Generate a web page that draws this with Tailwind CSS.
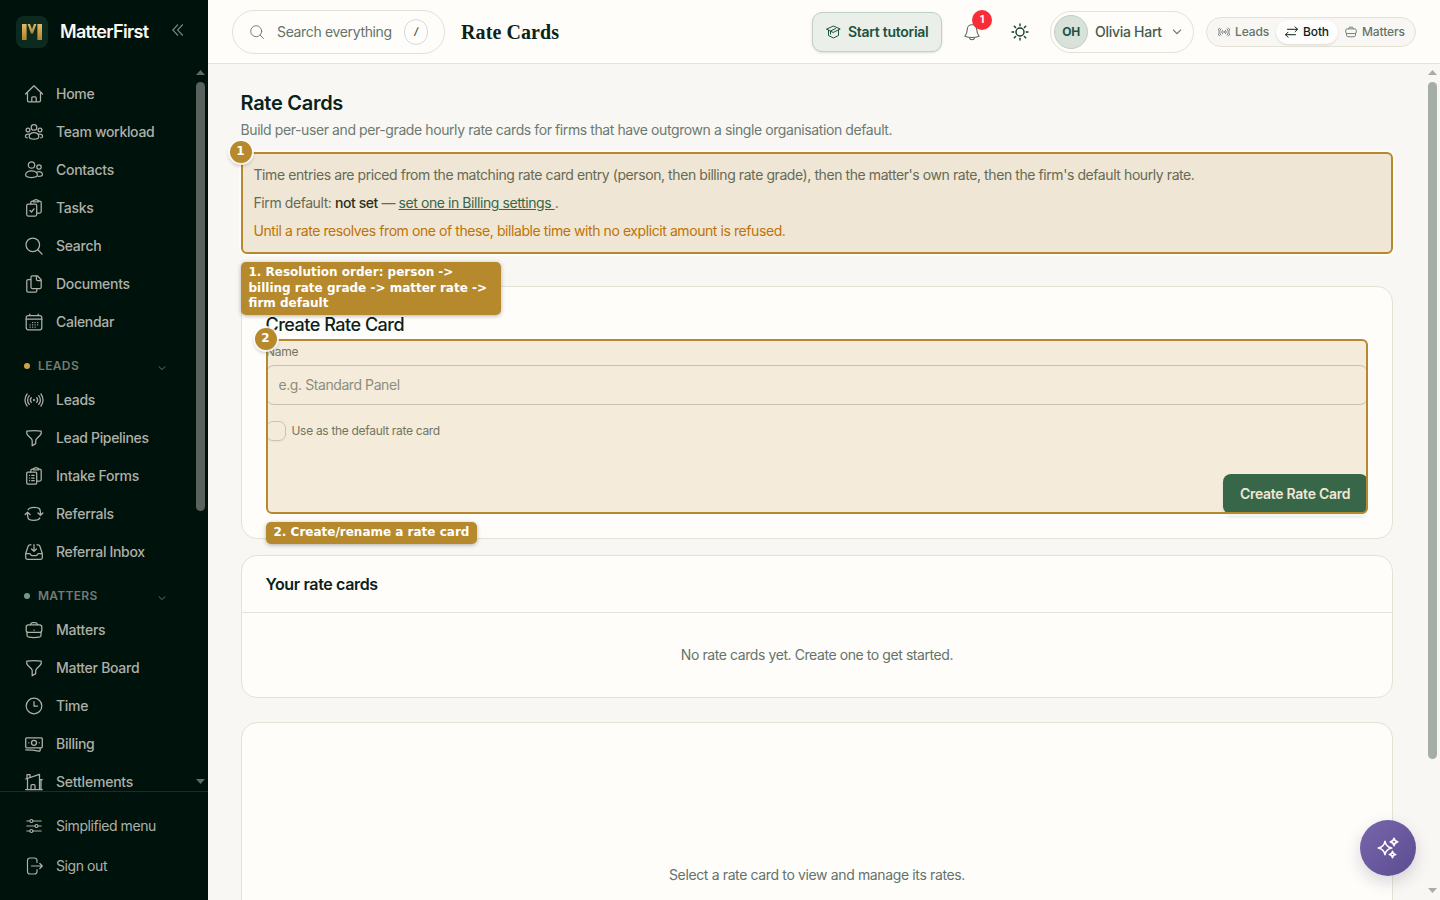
<!DOCTYPE html>
<html lang="en">

<head>
    <meta charset="UTF-8">
    <meta name="viewport" content="width=device-width, initial-scale=1.0">
    <title>Rate Cards - MatterFirst</title>
    <script src="https://cdn.jsdelivr.net/npm/@tailwindcss/browser@4"></script>
</head>

<body class="flex h-screen overflow-hidden bg-[#f9f7f3] font-['Inter','Liberation_Sans',sans-serif] text-sm tracking-[-0.02em] text-[#0b2219]">

    <!-- Sidebar -->
    <aside class="flex h-full w-[208px] shrink-0 flex-col bg-[#00120c] text-[#aeb0a8]">
        <div class="flex h-16 shrink-0 items-center pl-4">
            <div class="grid size-8 place-content-center rounded-lg bg-[#0c2a20]">
                <svg class="size-5" viewBox="0 0 20 20">
                    <defs>
                        <linearGradient id="gold" x1="0" y1="0" x2="0" y2="1">
                            <stop offset="0" stop-color="#e3bb66" />
                            <stop offset="1" stop-color="#b0832c" />
                        </linearGradient>
                    </defs>
                    <g fill="url(#gold)">
                        <rect x="0" y="2" width="4.6" height="16" />
                        <rect x="15.4" y="2" width="4.6" height="16" />
                        <path d="M5.6 2h2.400L10 7.300 12 2h2.400L11 11.500H9z" />
                    </g>
                </svg>
            </div>
            <span class="ml-3 w-[112px] whitespace-nowrap text-lg font-semibold tracking-[-0.037em] text-[#fbf8f0]">MatterFirst</span>
            <svg class="-mt-1 size-3" viewBox="0 0 12 12" fill="none" stroke="#7d857f" stroke-width="1.100"><path d="M6 .5.8 6 6 11.500M10.800.5 5.600 6l5.200 5.500" /></svg>
        </div>

        <div class="flex min-h-0 flex-1 overflow-hidden">
            <nav class="w-[196px] shrink-0 pt-[11px] pl-6 font-medium">
                <a class="flex h-[38px] items-center gap-3">
                    <svg class="size-5" viewBox="0 0 20 20" fill="none" stroke="currentColor" stroke-width="1.250" stroke-linecap="round" stroke-linejoin="round"><path d="M1.500 10 10 1.800 18.500 10M3.500 8.200v8.300a1.300 1.300 0 0 0 1.300 1.300h10.400a1.300 1.300 0 0 0 1.300-1.300V8.200M7.800 17.800v-4a1 1 0 0 1 1-1h2.400a1 1 0 0 1 1 1v4" /></svg>
                    <span>Home</span>
                </a>
                <a class="flex h-[38px] items-center gap-3">
                    <svg class="size-5" viewBox="0 0 20 20" fill="none" stroke="currentColor" stroke-width="1.250" stroke-linecap="round"><circle cx="10" cy="5.400" r="2.800" /><circle cx="4" cy="8" r="1.900" /><circle cx="16" cy="8" r="1.900" /><path d="M10 10.500c-2.800 0-4.800 1.700-4.800 4.200 0 1.700 2.100 2.400 4.800 2.400s4.800-.7 4.800-2.400c0-2.500-2-4.200-4.800-4.200zM5 12.100c-2.200-.4-3.600.9-3.600 2.500 0 .9.900 1.200 1.900 1.200M15 12.100c2.200-.4 3.600.9 3.600 2.500 0 .9-.9 1.200-1.900 1.200" /></svg>
                    <span class="tracking-[-0.023em]">Team workload</span>
                </a>
                <a class="flex h-[38px] items-center gap-3">
                    <svg class="size-5" viewBox="0 0 20 20" fill="none" stroke="currentColor" stroke-width="1.250" stroke-linecap="round"><circle cx="7.500" cy="5" r="3.200" /><circle cx="15" cy="7" r="2.200" /><path d="M7.500 10.800c-3.300 0-5.900 1.800-5.900 4.300 0 1.600 2.100 2.400 5.900 2.400s5.900-.8 5.900-2.400c0-2.500-2.600-4.300-5.900-4.300zM12.500 12.300c2.800-1.500 6-.2 6 2.200 0 1.300-1.200 1.900-4.200 1.900" /></svg>
                    <span>Contacts</span>
                </a>
                <a class="flex h-[38px] items-center gap-3">
                    <svg class="size-5" viewBox="0 0 20 20" fill="none" stroke="currentColor" stroke-width="1.250" stroke-linecap="round" stroke-linejoin="round"><rect x="2.700" y="6" width="10" height="12" rx="1.500" /><path d="m6 12.500 1.500 1.500 2.500-3.200M6.800 6V4.500A1.500 1.500 0 0 1 8.300 3h.9M14.800 3h.9a1.500 1.500 0 0 1 1.500 1.500v9a1.500 1.500 0 0 1-1.500 1.500h-3" /><path d="M9.300 3.800V2.900c1-.2 1.200-1.400 2.700-1.400s1.700 1.200 2.700 1.400v.9z" /></svg>
                    <span>Tasks</span>
                </a>
                <a class="flex h-[38px] items-center gap-3">
                    <svg class="size-5" viewBox="0 0 20 20" fill="none" stroke="currentColor" stroke-width="1.250" stroke-linecap="round"><circle cx="8.800" cy="8.800" r="6.800" /><path d="m13.700 13.700 4.300 4.300" /></svg>
                    <span>Search</span>
                </a>
                <a class="flex h-[38px] items-center gap-3">
                    <svg class="size-5" viewBox="0 0 20 20" fill="none" stroke="currentColor" stroke-width="1.250" stroke-linecap="round" stroke-linejoin="round"><path d="M8.300 1.800h5l3.900 3.900v7.500a1.300 1.300 0 0 1-1.300 1.300H8.300A1.300 1.300 0 0 1 7 13.200V3.100a1.300 1.300 0 0 1 1.300-1.300zM12.400 2v3.300a1.300 1.300 0 0 0 1.300 1.300H17M7 5.600H4.100a1.300 1.300 0 0 0-1.300 1.300v9.900a1.300 1.300 0 0 0 1.300 1.300h7.400a1.300 1.300 0 0 0 1.300-1.300v-2.300" /></svg>
                    <span>Documents</span>
                </a>
                <a class="flex h-[38px] items-center gap-3">
                    <svg class="size-5" viewBox="0 0 20 20" fill="none" stroke="currentColor" stroke-width="1.250" stroke-linecap="round"><rect x="2.200" y="3.500" width="15.600" height="14.300" rx="2" /><path d="M2.200 7.200h15.600M5.800 2v1.500M14.200 2v1.500" /><path d="M8.500 10.500h.2M11 10.500h.2M13.600 10.500h.2M6 12.800h.2M8.500 12.800h.2M11 12.800h.2M13.600 12.800h.2M6 15h.2M8.500 15h.2M11 15h.2" /></svg>
                    <span>Calendar</span>
                </a>

                <div class="mt-[10px] flex h-[30px] items-center text-xs font-semibold text-[#757b74]">
                    <span class="size-1.5 rounded-full bg-[#d2a243]"></span>
                    <span class="ml-2 w-[120px] tracking-[0.03em]">LEADS</span>
                    <svg class="mt-1 h-1 w-2" viewBox="0 0 8 4" fill="none" stroke="#666e68"><path d="m.7.5 3.300 3L7.300.5" /></svg>
                </div>
                <a class="flex h-[38px] items-center gap-3">
                    <svg class="size-5" viewBox="0 0 20 20" fill="none" stroke="currentColor" stroke-width="1.250" stroke-linecap="round"><circle cx="10" cy="10" r=".5" /><path d="M7.300 7.700a3.600 3.600 0 0 0 0 4.600M12.700 7.700a3.600 3.600 0 0 1 0 4.600M5.300 5.600a6.500 6.500 0 0 0 0 8.800M14.700 5.600a6.500 6.500 0 0 1 0 8.800M3.100 4a9.500 9.500 0 0 0 0 12M16.900 4a9.500 9.500 0 0 1 0 12" /></svg>
                    <span>Leads</span>
                </a>
                <a class="flex h-[38px] items-center gap-3">
                    <svg class="size-5" viewBox="0 0 20 20" fill="none" stroke="currentColor" stroke-width="1.250" stroke-linejoin="round"><path d="M10 2.500c2.500 0 4.900.2 7.200.6.400 1.700.1 3-1.100 4.200l-3.500 3.500c-.6.600-.9 1.300-.9 2.100v2.700L8.200 17.800v-4.900c0-.8-.3-1.500-.9-2.100L3.800 7.300C2.700 6.100 2.400 4.800 2.800 3.100c2.300-.4 4.700-.6 7.200-.6z" /></svg>
                    <span class="tracking-[-0.023em]">Lead Pipelines</span>
                </a>
                <a class="flex h-[38px] items-center gap-3">
                    <svg class="size-5" viewBox="0 0 20 20" fill="none" stroke="currentColor" stroke-width="1.250" stroke-linecap="round" stroke-linejoin="round"><rect x="2.700" y="6" width="10" height="12" rx="1" /><path d="M5.500 9.300h.1M5.500 12h.1M5.500 14.700h.1M7.700 9.300h2.500M7.700 12h2.500M7.700 14.700h2.500M6.800 6V4.500A1.500 1.500 0 0 1 8.300 3h.9M14.800 3h.9a1.500 1.500 0 0 1 1.500 1.500v9a1.500 1.500 0 0 1-1.500 1.500h-3" /><path d="M9.300 3.800V2.900c1-.2 1.200-1.400 2.700-1.400s1.700 1.200 2.700 1.400v.9z" /></svg>
                    <span>Intake Forms</span>
                </a>
                <a class="flex h-[38px] items-center gap-3">
                    <svg class="size-5" viewBox="0 0 20 20" fill="none" stroke="currentColor" stroke-width="1.300" stroke-linecap="round" stroke-linejoin="round"><path d="M1.200 10.500 3.500 8.200l2.500 2.300M18.800 9 16.500 11.300 14 9M3.500 8.500c0 6.500.5 7.800 6.500 7.800 2.800 0 4.800-.2 5.800-2.300M16.500 11c0-6.500-.5-7.600-6.500-7.600-2.800 0-4.800.2-5.800 2.300" /></svg>
                    <span>Referrals</span>
                </a>
                <a class="flex h-[38px] items-center gap-3">
                    <svg class="size-5" viewBox="0 0 20 20" fill="none" stroke="currentColor" stroke-width="1.250" stroke-linecap="round" stroke-linejoin="round"><path d="M7 2.800H5.800a1.700 1.700 0 0 0-1.600 1.200L1.700 11.500v4.300a1.500 1.500 0 0 0 1.500 1.500h13.600a1.500 1.500 0 0 0 1.500-1.500v-4.300L15.800 4a1.700 1.700 0 0 0-1.600-1.200H13M1.700 11.500h3.500c.6 0 1 .3 1.300.8l.3.600c.3.500.7.800 1.300.8h3.800c.6 0 1-.3 1.300-.8l.3-.6c.3-.5.7-.8 1.300-.8h3.500M10 2.500v6.700M7.600 7l2.400 2.400L12.400 7" /></svg>
                    <span class="tracking-[-0.023em]">Referral Inbox</span>
                </a>

                <div class="mt-[10px] flex h-[30px] items-center text-xs font-semibold text-[#757b74]">
                    <span class="size-1.5 rounded-full bg-[#6d9c87]"></span>
                    <span class="ml-2 w-[120px] tracking-[0.025em]">MATTERS</span>
                    <svg class="mt-1 h-1 w-2" viewBox="0 0 8 4" fill="none" stroke="#666e68"><path d="m.7.5 3.300 3L7.300.5" /></svg>
                </div>
                <a class="flex h-[38px] items-center gap-3">
                    <svg class="size-5" viewBox="0 0 20 20" fill="none" stroke="currentColor" stroke-width="1.250" stroke-linecap="round"><rect x="2.200" y="4.800" width="15.600" height="7.600" rx="2.200" /><path d="M3 12v3.200c0 1.300.8 1.900 2 2 3.300.4 6.700.4 10 0 1.200-.1 2-.7 2-2V12M6.500 4.700c.2-1.500.8-2.200 2-2.200h3c1.200 0 1.800.7 2 2.200M10 10.200h.1" /></svg>
                    <span class="tracking-[-0.015em]">Matters</span>
                </a>
                <a class="flex h-[38px] items-center gap-3">
                    <svg class="size-5" viewBox="0 0 20 20" fill="none" stroke="currentColor" stroke-width="1.250" stroke-linejoin="round"><path d="M10 2.500c2.500 0 4.900.2 7.200.6.400 1.700.1 3-1.100 4.200l-3.500 3.500c-.6.600-.9 1.300-.9 2.100v2.700L8.200 17.800v-4.900c0-.8-.3-1.500-.9-2.100L3.800 7.300C2.700 6.100 2.400 4.800 2.800 3.100c2.300-.4 4.700-.6 7.200-.6z" /></svg>
                    <span>Matter Board</span>
                </a>
                <a class="flex h-[38px] items-center gap-3">
                    <svg class="size-5" viewBox="0 0 20 20" fill="none" stroke="currentColor" stroke-width="1.250" stroke-linecap="round" stroke-linejoin="round"><circle cx="10" cy="10" r="7.800" /><path d="M10 5.500V10h3.500" /></svg>
                    <span>Time</span>
                </a>
                <a class="flex h-[38px] items-center gap-3">
                    <svg class="size-5" viewBox="0 0 20 20" fill="none" stroke="currentColor" stroke-width="1.300" stroke-linecap="round" stroke-linejoin="round"><rect x="1.700" y="3.800" width="16.600" height="10" rx="1" /><circle cx="10" cy="8.800" r="2.500" /><path d="M4.800 8.800h.1M15.200 8.800h.1M1.700 15.800c4.700 0 9 .4 13 1.400.8.200 1.500-.3 1.500-1.100v-2" /></svg>
                    <span>Billing</span>
                </a>
                <a class="flex h-[38px] items-center gap-3">
                    <svg class="size-5" viewBox="0 0 20 20" fill="none" stroke="currentColor" stroke-width="1.250" stroke-linecap="round" stroke-linejoin="round"><path d="M1.700 17.500h16.600M3.500 17.500V6.500M1.700 7 15.500 2.300v15.200M3 6.300V2.500h3v2.700M15.500 7.500h2.800M17 7.500v10M7 17.500v-4a1 1 0 0 1 1-1h2a1 1 0 0 1 1 1v4" /></svg>
                    <span class="tracking-[-0.015em]">Settlements</span>
                </a>
            </nav>
            <div class="flex w-[9px] flex-col pt-1.5">
                <svg class="h-[5px] w-[9px] shrink-0" viewBox="0 0 9 5"><path d="M4.500 0 9 5H0z" fill="#616a65" /></svg>
                <div class="mt-[7px] h-[429px] shrink-0 rounded-full bg-[#59625d]"></div>
                <svg class="mt-[268px] h-[5px] w-[9px] shrink-0" viewBox="0 0 9 5"><path d="M4.500 5 9 0H0z" fill="#616a65" /></svg>
            </div>
        </div>

        <div class="h-[109px] shrink-0 border-t border-[#1d2e27] pt-[14px] pl-6 tracking-[-0.03em]">
            <a class="flex h-10 items-center gap-3">
                <svg class="size-5" viewBox="0 0 20 20" fill="none" stroke="currentColor" stroke-width="1.200" stroke-linecap="round"><path d="M2.800 5h3M9 5h8.200M2.800 10h8.200M14 10h3.200M2.800 15h3M9 15h8.200" /><circle cx="7.400" cy="5" r="1.500" /><circle cx="12.500" cy="10" r="1.500" /><circle cx="7.400" cy="15" r="1.500" /></svg>
                <span>Simplified menu</span>
            </a>
            <a class="flex h-10 items-center gap-3">
                <svg class="size-5" viewBox="0 0 20 20" fill="none" stroke="currentColor" stroke-width="1.200" stroke-linecap="round" stroke-linejoin="round"><path d="M13 6.500V4.500A2.500 2.500 0 0 0 10.500 2H6a2.500 2.500 0 0 0-2.500 2.500v11A2.500 2.500 0 0 0 6 18h4.500a2.500 2.500 0 0 0 2.500-2.500v-2M7.500 10h10.800M15.800 7.500l2.500 2.500-2.500 2.500" /></svg>
                <span>Sign out</span>
            </a>
        </div>
    </aside>

    <div class="flex min-w-0 flex-1 flex-col">
        <!-- Top bar -->
        <header class="flex h-16 shrink-0 items-center border-b border-[#e3e2d9] bg-[#fefdfa] pr-6 pl-6">
            <div class="flex h-11 w-[213px] items-center rounded-full border border-[#e3e2d5] pl-[17px] text-[#64736b]">
                <svg class="size-3.5" viewBox="0 0 14 14" fill="none" stroke="currentColor" stroke-width=".9" stroke-linecap="round"><circle cx="6.200" cy="6.200" r="5.500" /><path d="m10.200 10.200 3.300 3.300" /></svg>
                <span class="ml-[13px] w-[127px] whitespace-nowrap tracking-[-0.025em]">Search everything</span>
                <kbd class="grid h-[26px] w-6 place-content-center rounded-full border border-[#d5dae0] font-['Inter'] text-[10px] font-semibold italic text-[#3c5045]">/</kbd>
            </div>
            <h1 class="ml-4 font-['Liberation_Serif',serif] text-xl font-bold tracking-[0.005em]">Rate Cards</h1>

            <button class="ml-auto flex h-10 w-[130px] items-center rounded-[10px] border border-[#bfd0c5] bg-[#eaefe9] pl-[13px] font-semibold text-[#1d5340] shadow-sm">
                <svg class="h-3.5 w-[15px]" viewBox="0 0 15 14" fill="none" stroke="currentColor" stroke-width="1" stroke-linejoin="round" stroke-linecap="round"><path d="M.8 4 7.500 1l6.700 3-6.700 3.300zM2.500 5v5.500L7.500 13l5-2.500V5M4.500 9V6l5-2.400" /></svg>
                <span class="ml-[7px] whitespace-nowrap">Start tutorial</span>
            </button>
            <div class="relative ml-[22px] h-[18px] w-4">
                <svg class="h-[18px] w-4" viewBox="0 0 16 18" fill="none" stroke="#566b60" stroke-width="1.100" stroke-linejoin="round"><path d="M8 1.700c-2.800 0-4.700 2-4.700 4.600C3.300 9.500 2.400 11 .9 13.300c4.700 1.600 9.500 1.600 14.200 0C13.600 11 12.700 9.500 12.700 6.300c0-2.600-1.900-4.600-4.700-4.600zM5.300 14.600c.3 1.300 1.300 2.100 2.700 2.100s2.400-.8 2.700-2.100" /></svg>
                <span class="absolute -top-[13px] left-2 grid size-5 place-content-center rounded-full bg-[#fb2c36] text-[10px] font-bold text-white">1</span>
            </div>
            <svg class="ml-[31px] size-[18px]" viewBox="0 0 18 18" fill="none" stroke="#123c2e" stroke-width="1.400" stroke-linecap="round"><circle cx="9" cy="9" r="4" /><path d="M9 1v1.800M9 15.200V17M1 9h1.800M15.200 9H17M3.300 3.300l1.300 1.300M13.400 13.400l1.300 1.300M3.300 14.700l1.300-1.300M13.400 4.600l1.300-1.300" /></svg>
            <div class="ml-[21px] flex h-[42px] w-[144px] items-center rounded-full border border-[#e3e2d5] pl-[3px]">
                <span class="grid size-[34px] place-content-center rounded-full border border-[#bfd0c5] bg-[#d9e2da] text-xs font-bold text-[#1d5340]">OH</span>
                <span class="ml-[7px] w-[77px] whitespace-nowrap font-medium text-[#465a50]">Olivia Hart</span>
                <svg class="h-1.5 w-2.5" viewBox="0 0 10 6" fill="none" stroke="#64736b" stroke-width="1.100"><path d="m1 .7 4 4 4-4" /></svg>
            </div>
            <div class="ml-3 flex h-[30px] w-[210px] items-center rounded-full border border-[#e3e2d5] bg-[#f9f7f3] text-xs font-medium tracking-[-0.01em] text-[#64736b]">
                <div class="flex w-[69px] items-center gap-[5px] pl-[11px]">
                    <svg class="size-3 shrink-0" viewBox="0 0 20 20" fill="none" stroke="currentColor" stroke-width="1.500" stroke-linecap="round"><circle cx="10" cy="10" r=".6" /><path d="M7.300 7.300a4 4 0 0 0 0 5.400M12.700 7.300a4 4 0 0 1 0 5.400M4.800 4.800a7.200 7.200 0 0 0 0 10.400M15.200 4.800a7.200 7.200 0 0 1 0 10.400M2.200 3.500a10 10 0 0 0 0 13M17.800 3.500a10 10 0 0 1 0 13" /></svg>
                    <span>Leads</span>
                </div>
                <div class="flex h-6 w-[62px] items-center gap-[5px] rounded-full bg-[#fefdfb] pl-[9px] text-[#0b2219] shadow-sm">
                    <svg class="h-3 w-[13px] shrink-0" viewBox="0 0 13 12" fill="none" stroke="currentColor" stroke-width="1" stroke-linecap="round" stroke-linejoin="round"><path d="M2.500 3.300h10M10 .8l2.500 2.500L10 5.800M10.500 8.700H.5M3 6.200.5 8.700 3 11.200" /></svg>
                    <span>Both</span>
                </div>
                <div class="flex items-center gap-[5px] pl-[7px]">
                    <svg class="size-3 shrink-0" viewBox="0 0 20 20" fill="none" stroke="currentColor" stroke-width="1.500"><rect x="1.200" y="4.800" width="17.600" height="7.800" rx="2.500" /><path d="M2.500 12v3.500c0 1.300.8 2 2 2.200 3.600.5 7.400.5 11 0 1.200-.2 2-.9 2-2.200V12M6 4.700c.2-1.800.8-2.700 2-2.700h4c1.200 0 1.800.9 2 2.700" /></svg>
                    <span>Matters</span>
                </div>
            </div>
        </header>

        <div class="flex min-h-0 flex-1 overflow-hidden">
            <main class="w-[1220px] shrink-0 pt-6 pr-[35px] pl-[33px] tracking-[-0.03em]">
                <h2 class="-ml-[0.5px] text-xl/[30px] font-semibold tracking-[-0.014em]">Rate Cards</h2>
                <p class="mt-[2px] -ml-[0.5px] text-sm/5 tracking-[-0.029em] text-[#6c7a72]">Build per-user and per-grade hourly rate cards for firms that have outgrown a single organisation default.</p>

                <!-- Rate resolution notice -->
                <section class="relative mt-3 h-[102px] pt-[13px] pl-[12.5px] text-sm/5 text-[#56665b]">
                    <p>Time entries are priced from the matching rate card entry (person, then billing rate grade), then the matter's own rate, then the firm's default hourly rate.</p>
                    <p class="mt-2">Firm default: <b class="font-medium text-[#0b2219]">not set</b> — <a class="text-[#20624d] underline">set one in Billing settings&nbsp;</a>.</p>
                    <p class="mt-2 text-[#bd7000]">Until a rate resolves from one of these, billable time with no explicit amount is refused.</p>
                    <div class="absolute inset-0 rounded-md border-2 border-[#b68a2c] bg-[#b9862c]/15 shadow-[0_0_0_2px_rgba(255,255,255,0.6)]"></div>
                    <span class="absolute -top-[11px] -left-[11px] grid size-[22px] place-content-center rounded-full bg-[#b68a2c] pr-px pb-0.5 font-['DejaVu_Sans'] text-xs font-bold tracking-normal text-white shadow-[0_0_0_2px_rgba(255,255,255,0.85),0_2px_4px_rgba(0,0,0,0.35)]">1</span>
                    <div class="absolute top-[110px] left-0 z-10 w-[260px] rounded-[5px] bg-[#b68a2c] px-[7.500px] py-[3px] font-['DejaVu_Sans'] text-xs/[15.600px] font-bold tracking-normal text-white shadow-[0_1px_4px_rgba(0,0,0,0.3)]">1. Resolution order: person -&gt; billing rate grade -&gt; matter rate -&gt; firm default</div>
                </section>

                <!-- Create form -->
                <section class="mt-8 h-[253px] rounded-2xl border border-[#e3e2d5] bg-[#fefdfa] px-6 pt-6">
                    <h3 class="-ml-[0.5px] text-lg/7 font-medium tracking-[-0.027em]">Create Rate Card</h3>
                    <form class="relative h-[175px] w-[1102px] pt-[5px]">
                        <label class="block text-xs/4 tracking-[-0.02em] text-[#64736b]">Name</label>
                        <input type="text" placeholder="e.g. Standard Panel" class="mt-[5px] block h-10 w-full rounded-lg border border-[#cbcbc2] px-[11.5px] pb-0.5 text-sm placeholder:text-[#84908a]">
                        <label class="mt-4 flex items-center gap-[5.500px] text-xs tracking-[-0.026em] text-[#64736b]">
                            <span class="size-5 rounded-[7px] border border-[#cfcec5] shadow-xs"></span>
                            <span>Use as the default rate card</span>
                        </label>
                        <button type="button" class="mt-[33px] ml-auto block h-10 w-[145px] rounded-lg bg-[#20624d] pr-px font-semibold tracking-[-0.02em] text-[#fbf8f0] shadow-[0_3px_3px_rgba(32,98,77,0.15)]">Create Rate Card</button>
                        <div class="absolute inset-0 rounded-md border-2 border-[#b68a2c] bg-[#b9862c]/15 shadow-[0_0_0_2px_rgba(255,255,255,0.6)]"></div>
                        <span class="absolute -top-[11px] -left-[11px] grid size-[22px] place-content-center rounded-full bg-[#b68a2c] pr-px pb-0.5 font-['DejaVu_Sans'] text-xs font-bold tracking-normal text-white shadow-[0_0_0_2px_rgba(255,255,255,0.85),0_2px_4px_rgba(0,0,0,0.35)]">2</span>
                        <div class="absolute top-[183px] left-0 rounded-[5px] bg-[#b68a2c] px-[7.500px] py-[3px] font-['DejaVu_Sans'] text-xs/[15.600px] font-bold tracking-normal whitespace-nowrap text-white shadow-[0_1px_4px_rgba(0,0,0,0.3)]">2. Create/rename a rate card</div>
                    </form>
                </section>

                <section class="mt-4 h-[143px] rounded-2xl border border-[#e3e2d5] bg-[#fefdfa]">
                    <h3 class="flex h-[57px] items-center border-b border-[#e3e2d9] pl-[23.5px] text-base font-semibold tracking-[-0.022em]">Your rate cards</h3>
                    <p class="pt-8 text-center text-sm/5 text-[#64736b]">No rate cards yet. Create one to get started.</p>
                </section>

                <section class="mt-6 h-[300px] rounded-2xl border border-[#e3e2d5] bg-[#fefdfa]">
                    <p class="pt-[142px] text-center text-sm/5 tracking-[-0.026em] text-[#64736b]">Select a rate card to view and manage its rates.</p>
                </section>
            </main>
            <div class="flex w-[9px] flex-col pt-1.5">
                <svg class="h-[5px] w-[9px] shrink-0" viewBox="0 0 9 5"><path d="M4.500 0 9 5H0z" fill="#a6ada6" /></svg>
                <div class="mt-[7px] h-[677px] shrink-0 rounded-full bg-[#a6ada6]"></div>
                <svg class="mt-[129px] h-[5px] w-[9px] shrink-0" viewBox="0 0 9 5"><path d="M4.500 5 9 0H0z" fill="#a6ada6" /></svg>
            </div>
        </div>
    </div>

    <button class="fixed right-6 bottom-6 grid size-14 place-content-center rounded-full bg-linear-to-br from-[#7866ac] to-[#5c4c90] shadow-[0_6px_16px_rgba(60,50,90,0.2)]">
        <svg class="size-6" viewBox="0 0 24 24" fill="none" stroke="#fff" stroke-width="1.600" stroke-linejoin="round"><path d="M9 5.300c.8 4.200 2.500 5.900 6.700 6.700-4.200.8-5.900 2.500-6.700 6.700-.8-4.200-2.500-5.900-6.700-6.700 4.200-.8 5.900-2.500 6.700-6.700zM18 2.200c.4 2.400 1.300 3.300 3.700 3.700-2.400.4-3.300 1.300-3.700 3.700-.4-2.400-1.300-3.300-3.700-3.700 2.400-.4 3.300-1.300 3.700-3.700zM16.500 15.300c.3 2.100 1.100 2.900 3.200 3.200-2.100.3-2.900 1.100-3.200 3.200-.3-2.100-1.100-2.900-3.200-3.200 2.100-.3 2.900-1.100 3.200-3.200z" /></svg>
    </button>
</body>

</html>
